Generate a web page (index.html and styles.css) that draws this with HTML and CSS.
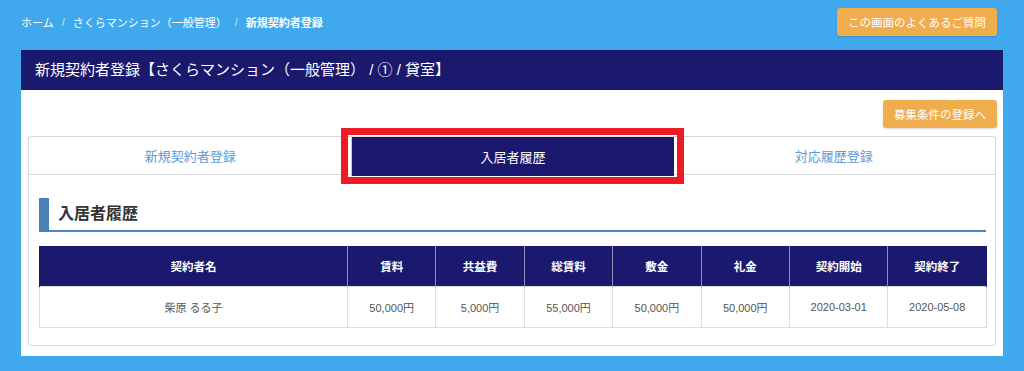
FILE: index.html
```html
<!DOCTYPE html>
<html lang="ja">
<head>
  <meta charset="UTF-8">
  <title>新規契約者登録</title>
  <link rel="stylesheet" href="styles.css">
</head>
<body>
  <!-- パンくず + FAQ -->
  <div class="topbar">
    <nav class="breadcrumb">
      <a href="#">ホーム</a>
      <span class="sep">/</span>
      <a href="#">さくらマンション（一般管理）</a>
      <span class="sep">/</span>
      <span class="current">新規契約者登録</span>
    </nav>
    <button class="btn-orange btn-faq">この画面のよくあるご質問</button>
  </div>

  <div class="panel">
    <div class="panel-head">新規契約者登録【さくらマンション（一般管理） / ① / 貸室】</div>
    <div class="panel-body">
      <div class="action-row">
        <button class="btn-orange">募集条件の登録へ</button>
      </div>

      <div class="tab-box">
        <ul class="tabs">
          <li class="tab">新規契約者登録</li>
          <li class="tab active">入居者履歴<span class="marker"></span></li>
          <li class="tab">対応履歴登録</li>
        </ul>

        <div class="tab-content">
          <h3 class="section-title">入居者履歴</h3>
          <table class="history">
            <colgroup>
              <col class="c-name">
              <col class="c-sm"><col class="c-sm"><col class="c-sm"><col class="c-sm"><col class="c-sm">
              <col class="c-md"><col class="c-md">
            </colgroup>
            <thead>
              <tr>
                <th>契約者名</th>
                <th>賃料</th>
                <th>共益費</th>
                <th>総賃料</th>
                <th>敷金</th>
                <th>礼金</th>
                <th>契約開始</th>
                <th>契約終了</th>
              </tr>
            </thead>
            <tbody>
              <tr>
                <td>柴原 るる子</td>
                <td>50,000円</td>
                <td>5,000円</td>
                <td>55,000円</td>
                <td>50,000円</td>
                <td>50,000円</td>
                <td>2020-03-01</td>
                <td>2020-05-08</td>
              </tr>
            </tbody>
          </table>
        </div>
      </div>
    </div>
  </div>
</body>
</html>
```

FILE: styles.css
```css
/* Reset minimal */
* { box-sizing: border-box; margin: 0; padding: 0; }

body {
  font-family: "Liberation Sans", "Noto Sans CJK JP", sans-serif;
  background: #40a8ec;
  color: #333;
  font-size: 11.5px;
}

/* Barre du haut */
.topbar {
  display: flex;
  justify-content: space-between;
  align-items: flex-start;
  height: 50px;
  padding: 8px 27px 0 21px;
}
.breadcrumb {
  display: flex;
  align-items: center;
  gap: 8px;
  height: 26px;
  padding-top: 1px;
  font-size: 11px;
  color: #fff;
}
.breadcrumb a {
  color: #fff;
  text-decoration: none;
}
.breadcrumb .sep {
  color: #cfe6f8;
}
.breadcrumb .current {
  font-weight: bold;
}

.btn-orange {
  height: 28px;
  padding: 0 11px;
  font-family: inherit;
  font-size: 11.5px;
  color: #fff;
  background: #f0ad4e;
  border: none;
  border-radius: 3px;
  box-shadow: 0 1px 2px rgba(0,0,0,0.15);
  cursor: pointer;
}

/* Panneau principal */
.panel {
  margin: 0 21px;
  background: #fff;
}
.panel-head {
  height: 40px;
  line-height: 40px;
  padding-left: 14px;
  background: #1a196e;
  color: #fff;
  font-size: 15px;
}
.panel-body {
  padding: 10px 7px 10px 7px;
}
.action-row {
  display: flex;
  justify-content: flex-end;
  margin-right: -1px;
  margin-bottom: 8px;
}

/* Onglets */
.tab-box {
  border: 1px solid #d8d8d8;
  border-radius: 3px;
}
.tabs {
  display: flex;
  list-style: none;
  height: 38px;
  border-bottom: 1px solid #d8d8d8;
}
.tab {
  position: relative;
  flex: 1;
  display: flex;
  align-items: center;
  justify-content: center;
  font-size: 13px;
  color: #5b9bd8;
}
.tab.active {
  background: #1a196e;
  color: #fff;
  height: 39px;
  margin-left: -1px;
  margin-right: -2px;
  border-left: 1px solid #c9c9dd;
}
.marker {
  position: absolute;
  left: -11px;
  right: -10px;
  top: -9px;
  bottom: -8px;
  border: 7px solid #ed1c24;
}

.tab-content {
  padding: 23px 9px 17px 10px;
}
.section-title {
  height: 34px;
  line-height: 32px;
  padding-left: 9px;
  border-left: 10px solid #4a80b8;
  border-bottom: 2px solid #4a86c4;
  font-size: 16px;
  font-weight: bold;
  color: #333;
  margin-bottom: 14px;
}

/* Tableau */
.history {
  width: 947px;
  border-collapse: collapse;
  table-layout: fixed;
  font-size: 11px;
}
.c-name { width: 308px; }
.c-sm { width: 88.4px; }
.c-md { width: 98.5px; }
.history th {
  height: 40px;
  background: #1a196e;
  color: #fff;
  font-weight: bold;
  font-size: 11.5px;
  border: 1px solid #8e8db8;
  border-top: none;
  border-bottom: none;
}
.history th:first-child { border-left-color: #1a196e; }
.history th:last-child { border-right-color: #1a196e; }
.history td {
  height: 41px;
  text-align: center;
  color: #555;
  border: 1px solid #dedede;
}
```
